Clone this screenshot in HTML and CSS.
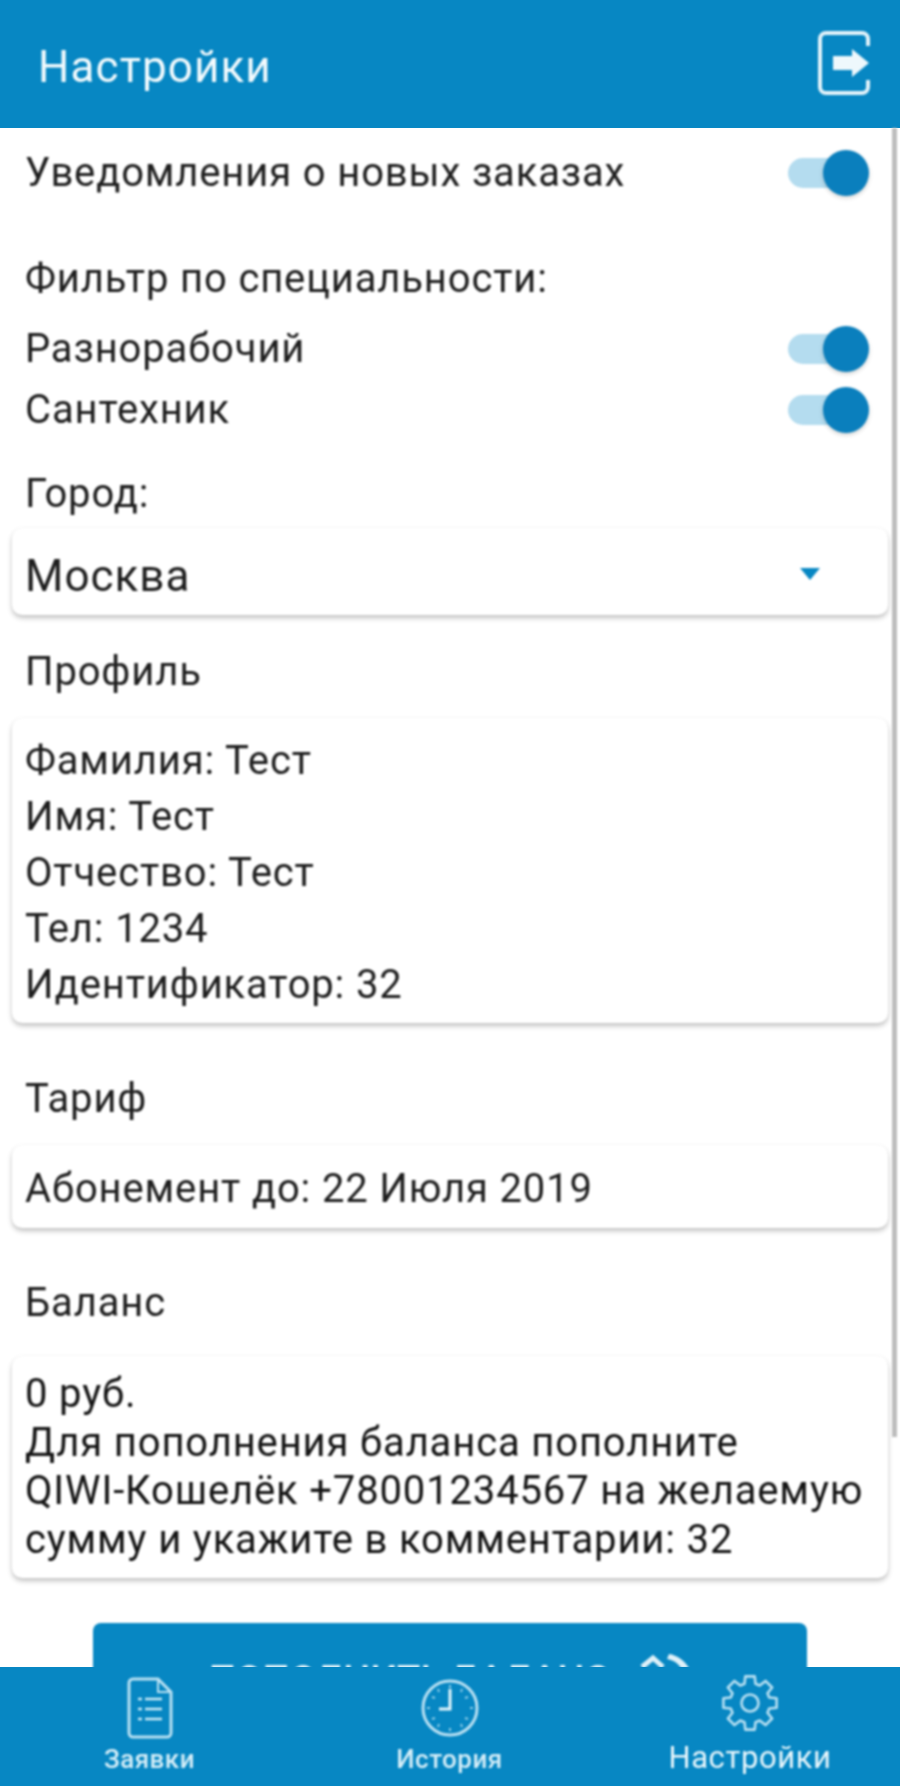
FILE: index.html
```html
<!DOCTYPE html>
<html lang="ru">
<head>
<meta charset="utf-8">
<title>Настройки</title>
<link rel="stylesheet" href="styles.css">
</head>
<body>
<div class="app">
  <header class="topbar">
    <h1 class="title">Настройки</h1>
    <svg class="exit" viewBox="0 0 52 64" width="52" height="64" aria-hidden="true">
      <path d="M50 15V8a6 6 0 0 0-6-6H8a6 6 0 0 0-6 6v48a6 6 0 0 0 6 6h36a6 6 0 0 0 6-6v-7" fill="none" stroke="#e4f3fa" stroke-width="4"/>
      <path d="M15 25h19V18L51 32 34 46V39H15z" fill="#eef8fc"/>
    </svg>
  </header>
  <main class="content">
    <div class="row row-notify"><span>Уведомления о новых заказах</span><span class="toggle"><i class="thumb"></i></span></div>
    <div class="label label-filter">Фильтр по специальности:</div>
    <div class="row row-a"><span>Разнорабочий</span><span class="toggle"><i class="thumb"></i></span></div>
    <div class="row row-b"><span>Сантехник</span><span class="toggle"><i class="thumb"></i></span></div>
    <div class="label label-city">Город:</div>
    <div class="card select"><span>Москва</span><i class="caret"></i></div>
    <div class="label label-profile">Профиль</div>
    <div class="card profile">
      <div>Фамилия: Тест</div>
      <div>Имя: Тест</div>
      <div>Отчество: Тест</div>
      <div>Тел: 1234</div>
      <div>Идентификатор: 32</div>
    </div>
    <div class="label label-tariff">Тариф</div>
    <div class="card tariff">Абонемент до: 22 Июля 2019</div>
    <div class="label label-balance">Баланс</div>
    <div class="card balance">
      <div>0 руб.</div>
      <div>Для пополнения баланса пополните</div>
      <div>QIWI-Кошелёк +78001234567 на желаемую</div>
      <div>сумму и укажите в комментарии: 32</div>
    </div>
    <div class="pay">
      <span>ПОПОЛНИТЬ БАЛАНС</span>
      <svg class="pay-icon" viewBox="0 0 52 40" width="52" height="40" aria-hidden="true">
        <path d="M3 15 14 6 24 15" fill="none" stroke="#dff1f9" stroke-width="5"/>
        <path d="M30 2C38 3 46 9 50 16L42 16C39 11 34 8 28 7z" fill="#dff1f9"/>
      </svg>
    </div>
  </main>
  <div class="scrollbar"></div>
  <nav class="tabs">
    <div class="tab">
      <svg class="tab-icon" viewBox="0 0 46 62" width="46" height="62" aria-hidden="true">
        <path d="M6 2H31L44 15V56a4 4 0 0 1-4 4H6a4 4 0 0 1-4-4V6a4 4 0 0 1 4-4z" fill="none" stroke="#b9e0f2" stroke-width="3"/>
        <path d="M31 2V15H44" fill="none" stroke="#b9e0f2" stroke-width="2"/>
        <path d="M11 22h4M18 22h17M11 32h4M18 32h17M11 42h4M18 42h17" fill="none" stroke="#c9e8f5" stroke-width="2.5"/>
      </svg>
      <span class="tab-label">Заявки</span>
    </div>
    <div class="tab">
      <svg class="tab-icon" viewBox="0 0 60 62" width="60" height="62" aria-hidden="true">
        <circle cx="30" cy="31" r="27" fill="none" stroke="#b9e0f2" stroke-width="3"/>
        <path d="M30 12V32H19" fill="none" stroke="#e6f5fb" stroke-width="3"/>
        <path d="M30 8v3M30 51v3M7 31h3M50 31h3M18 12l1 3M42 12l-1 3M12 20l3 1M48 20l-3 1M12 42l3-1M48 42l-3-1M18 50l1-3M42 50l-1-3" fill="none" stroke="#8fcde8" stroke-width="2"/>
      </svg>
      <span class="tab-label">История</span>
    </div>
    <div class="tab tab-active">
      <svg class="tab-icon tab-gear" viewBox="0 0 60 62" width="60" height="62" aria-hidden="true">
        <g transform="translate(30 31)" fill="none" stroke="#b9e0f2" stroke-width="2.6" stroke-linejoin="round">
          <path d="M-5.5-19.2-4.7-26.6 4.7-26.6 5.5-19.2 9.7-17.5 15.5-22.1 22.1-15.5 17.5-9.7 19.2-5.5 26.6-4.7 26.6 4.7 19.2 5.5 17.5 9.7 22.1 15.5 15.5 22.1 9.7 17.5 5.5 19.2 4.7 26.6-4.7 26.6-5.5 19.2-9.7 17.5-15.5 22.1-22.1 15.5-17.5 9.7-19.2 5.5-26.6 4.7-26.6-4.7-19.2-5.5-17.5-9.7-22.1-15.5-15.5-22.1-9.7-17.5z"/>
          <circle r="8.5"/>
        </g>
      </svg>
      <span class="tab-label">Настройки</span>
    </div>
  </nav>
</div>
</body>
</html>
```
FILE: styles.css
```css
* { box-sizing: border-box; }
html, body { margin: 0; padding: 0; background: #fff; }
.app {
  position: relative;
  width: 900px;
  height: 1786px;
  display: flex;
  flex-direction: column;
  overflow: hidden;
  font-family: Roboto, "Liberation Sans", sans-serif;
  color: #1e1e1e;
  font-size: 40px;
  letter-spacing: .85px;
  line-height: 56px;
}
.title, .exit, .content, .tab, .scrollbar { filter: blur(1px); }
.topbar {
  flex: 0 0 128px;
  background: #0787c3;
  display: flex;
  align-items: center;
  justify-content: space-between;
  padding: 0 30px 0 38px;
}
.title { margin: 6px 0 0; font-size: 44px; letter-spacing: 1.1px; font-weight: 400; color: #f2fafd; }
.exit { margin-top: -2px; }
.content { flex: 1 1 auto; min-height: 0; overflow: hidden; padding: 0 12px 0 12px; margin-bottom: -4px; }
.row { display: flex; justify-content: space-between; align-items: center; padding: 0 24px 0 13px; height: 56px; }
.label { padding-left: 13px; height: 56px; }
.row-notify { margin-top: 17px; }
.label-filter { margin-top: 50px; }
.row-a { margin-top: 14px; }
.row-b { margin-top: 5px; }
.label-city { margin-top: 28px; }
.label-profile { margin-top: 29px; }
.label-tariff { margin-top: 48px; }
.label-balance { margin-top: 47px; }
.toggle { position: relative; display: block; width: 76px; height: 30px; border-radius: 15px; background: #b4dcef; }
.thumb { position: absolute; right: -5px; top: -8px; width: 46px; height: 46px; border-radius: 50%; background: #0a7fbd; box-shadow: 0 2px 4px rgba(0,0,0,.18); }
.card { background: #fff; border-radius: 10px; box-shadow: 0 3px 5px rgba(0,0,0,.24), 0 0 3px rgba(0,0,0,.05); padding-left: 13px; }
.select { margin-top: 6px; height: 87px; padding-top: 8px; display: flex; align-items: center; justify-content: space-between; padding-right: 68px; font-size: 44px; letter-spacing: 1px; }
.caret { width: 0; height: 0; border-left: 10px solid transparent; border-right: 10px solid transparent; border-top: 12px solid #0787c3; margin-top: -4px; }
.profile { margin-top: 18px; padding-top: 15px; padding-bottom: 10px; }
.tariff { margin-top: 18px; height: 83px; padding-top: 4px; display: flex; align-items: center; }
.balance { margin-top: 25px; padding-top: 14px; padding-bottom: 14px; line-height: 48.5px; color: #141414; }
.pay {
  margin: 45px 81px 0;
  height: 96px;
  background: #0787c3;
  border-radius: 8px;
  color: #e6f5fb;
  display: flex;
  justify-content: center;
  gap: 29px;
  padding-top: 37px;
  line-height: 40px;
  font-size: 38px;
  letter-spacing: .3px;
  font-weight: 500;
}
.pay-icon { margin-top: -8px; flex: none; }
.scrollbar { position: absolute; right: 3px; top: 128px; width: 5px; height: 1309px; background: #bdbdbd; }
.tabs { flex: 0 0 119px; background: #0787c3; display: grid; grid-template-columns: 299px 301px 300px; position: relative; z-index: 1; }
.tab { display: flex; flex-direction: column; align-items: center; padding-top: 10px; color: #d6eef8; font-weight: 500; font-size: 26px; letter-spacing: .5px; line-height: 30px; }
.tab-icon { flex: none; }
.tab-gear { margin-top: -5px; }
.tab-label { margin-top: 5px; }
.tab-active .tab-label { font-size: 31px; letter-spacing: .6px; font-weight: 400; color: #eaf7fc; margin-top: 9px; }
```
